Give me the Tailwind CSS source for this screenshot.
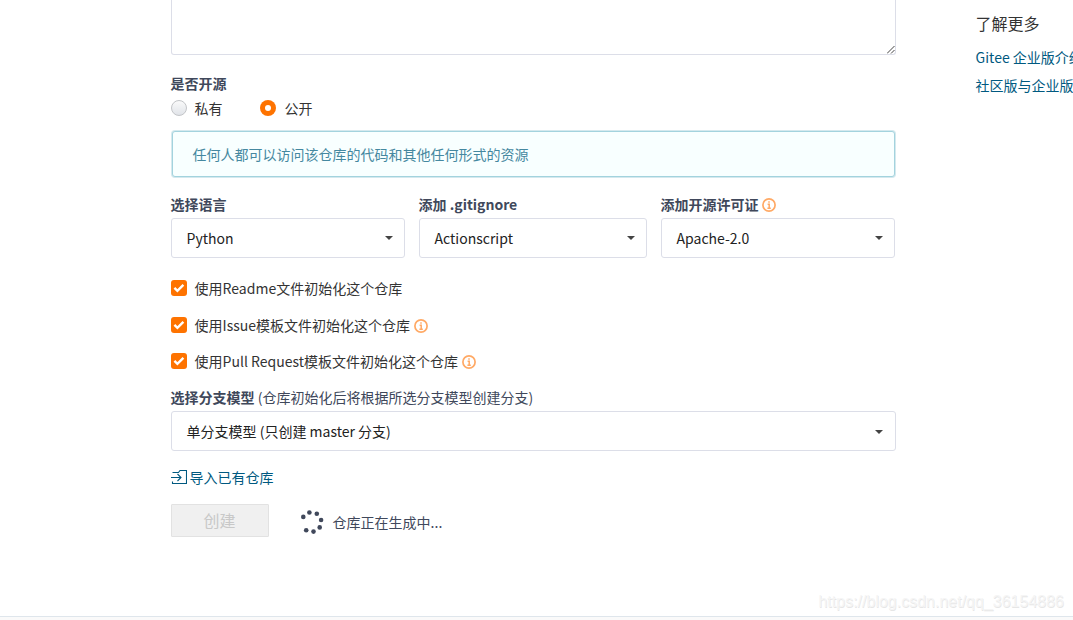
<!DOCTYPE html>
<html lang="zh-CN">

<head>
    <meta charset="UTF-8">
    <meta name="viewport" content="width=device-width, initial-scale=1.0">
    <title>新建仓库 - Gitee</title>
    <script src="https://cdn.jsdelivr.net/npm/@tailwindcss/browser@4"></script>
</head>

<body class="relative h-[620px] overflow-hidden bg-white font-['Noto_Sans_CJK_SC',sans-serif] text-sm leading-5 text-[#40485b]">
    <div class="flex h-[616px] gap-20 overflow-hidden pl-[170.6px]">
        <form class="w-[725px] shrink-0">
            <!-- description -->
            <div class="flex h-[55px] items-end justify-end rounded-b-[3px] border border-t-0 border-[#dcdee8]">
                <svg class="size-2" viewBox="0 0 8 8" fill="none" stroke="#444" stroke-width="1">
                    <path d="M0 7.5L7.5 0M4 7.5L7.5 4" />
                </svg>
            </div>

            <!-- visibility -->
            <div class="mt-[18px] font-bold">是否开源</div>
            <div class="mt-[5px] flex h-5 items-center text-[#333]">
                <label class="flex w-[89px] items-center gap-2">
                    <span class="size-4 rounded-full border border-[#c3c5c8] bg-linear-to-b from-[#fafafa] to-[#e1e4e9]"></span>
                    <span>私有</span>
                </label>
                <label class="flex items-center gap-[9px]">
                    <span class="flex size-4 items-center justify-center rounded-full bg-[#fe7300]"><span class="size-1.5 rounded-full bg-white"></span></span>
                    <span>公开</span>
                </label>
            </div>
            <div class="mx-px mt-[13px] flex h-[46px] items-center rounded-[3px] border border-[#a3d3de] bg-[#f8ffff] pl-5 text-[#4588a0] shadow-[0_0_0_1px_#d5e9ee]">任何人都可以访问该仓库的代码和其他任何形式的资源</div>

            <!-- language, gitignore, license -->
            <div class="mt-[17px] flex gap-3.5">
                <div class="w-[234px]">
                    <div class="font-bold">选择语言</div>
                    <div class="mt-1 flex h-10 items-center justify-between rounded-[3px] border border-[#dcdee8] pr-[11px] pl-[15px] text-[#222]">
                        <span>Python</span>
                        <svg class="h-1 w-2" viewBox="0 0 8 4"><path d="M0 0h8L4 4z" fill="#444" /></svg>
                    </div>
                </div>
                <div class="w-[228px]">
                    <div class="font-bold">添加 .gitignore</div>
                    <div class="mt-1 flex h-10 items-center justify-between rounded-[3px] border border-[#dcdee8] pr-[11px] pl-[15px] text-[#222]">
                        <span>Actionscript</span>
                        <svg class="h-1 w-2" viewBox="0 0 8 4"><path d="M0 0h8L4 4z" fill="#444" /></svg>
                    </div>
                </div>
                <div class="w-[234px]">
                    <div class="flex items-center gap-[3px] font-bold">添加开源许可证
                        <svg class="mt-px size-3.5" viewBox="0 0 14 14" fill="none" stroke="#ffa965">
                            <circle cx="7" cy="7" r="6.1" stroke-width="1.7" />
                            <path d="M7 3.2v1.6M5.6 6.2h1.6v4M5.4 10.2h3.4" stroke-width="1.5" />
                        </svg>
                    </div>
                    <div class="mt-1 flex h-10 items-center justify-between rounded-[3px] border border-[#dcdee8] pr-[11px] pl-[15px] text-[#222]">
                        <span>Apache-2.0</span>
                        <svg class="h-1 w-2" viewBox="0 0 8 4"><path d="M0 0h8L4 4z" fill="#444" /></svg>
                    </div>
                </div>
            </div>

            <!-- init options -->
            <div class="mt-5 flex h-5 items-center text-[#333]">
                <svg class="mr-2 size-4" viewBox="0 0 16 16"><rect width="16" height="16" rx="3" fill="#fe7300" /><path d="M3.4 7.8l3 3 6-6" fill="none" stroke="#fff" stroke-width="2.4" /></svg>
                <span>使用Readme文件初始化这个仓库</span>
            </div>
            <div class="mt-[17px] flex h-5 items-center text-[#333]">
                <svg class="mr-2 size-4" viewBox="0 0 16 16"><rect width="16" height="16" rx="3" fill="#fe7300" /><path d="M3.4 7.8l3 3 6-6" fill="none" stroke="#fff" stroke-width="2.4" /></svg>
                <span>使用Issue模板文件初始化这个仓库</span>
                <svg class="mt-0.5 ml-1 size-3.5" viewBox="0 0 14 14" fill="none" stroke="#ffa965">
                    <circle cx="7" cy="7" r="6.1" stroke-width="1.7" />
                    <path d="M7 3.2v1.6M5.6 6.2h1.6v4M5.4 10.2h3.4" stroke-width="1.5" />
                </svg>
            </div>
            <div class="mt-4 flex h-5 items-center text-[#333]">
                <svg class="mr-2 size-4" viewBox="0 0 16 16"><rect width="16" height="16" rx="3" fill="#fe7300" /><path d="M3.4 7.8l3 3 6-6" fill="none" stroke="#fff" stroke-width="2.4" /></svg>
                <span>使用Pull Request模板文件初始化这个仓库</span>
                <svg class="mt-0.5 ml-1 size-3.5" viewBox="0 0 14 14" fill="none" stroke="#ffa965">
                    <circle cx="7" cy="7" r="6.1" stroke-width="1.7" />
                    <path d="M7 3.2v1.6M5.6 6.2h1.6v4M5.4 10.2h3.4" stroke-width="1.5" />
                </svg>
            </div>

            <!-- branch model -->
            <div class="mt-4"><b>选择分支模型</b> (仓库初始化后将根据所选分支模型创建分支)</div>
            <div class="mt-1 flex h-10 items-center justify-between rounded-[3px] border border-[#dcdee8] pr-3 pl-[15px] text-[#222]">
                <span>单分支模型 (只创建 master 分支)</span>
                <svg class="mt-px h-1 w-2" viewBox="0 0 8 4"><path d="M0 0h8L4 4z" fill="#444" /></svg>
            </div>

            <a class="mt-4 flex h-5 items-center gap-[3px] text-[#005980]">
                <svg class="size-4" viewBox="0 0 16 16" fill="none" stroke="#005980" stroke-width="1.1">
                    <path d="M1.5 3.5h6l1.5-2h6.5v13H1.5v-2M0 8.5h10M6.5 5l3.5 3.5L6.5 12" />
                </svg>
                <span>导入已有仓库</span>
            </a>

            <div class="mt-[17px] flex">
                <button type="button" disabled class="flex h-[33px] w-[98px] justify-center rounded-[1px] border border-[#e2e2e2] bg-[#f0f0f0] pt-[3px] text-base text-[#c8c8c8]">创建</button>
                <svg class="mt-1.5 ml-8 size-6" viewBox="0 0 24 24" fill="#40485b">
                    <circle cx="2.3" cy="6.9" r="2.3" />
                    <circle cx="8.4" cy="2.5" r="2.3" />
                    <circle cx="15.8" cy="3.8" r="2.3" />
                    <circle cx="20.1" cy="10" r="2.3" />
                    <circle cx="18.7" cy="17.4" r="2.3" />
                    <circle cx="12.5" cy="21.6" r="2.3" />
                    <circle cx="5.2" cy="20.3" r="2.3" />
                </svg>
                <span class="mt-2 ml-2">仓库正在生成中...</span>
            </div>
        </form>

        <aside class="w-60 shrink-0 whitespace-nowrap">
            <div class="mt-[11px] text-base leading-6 text-[#333]">了解更多</div>
            <a class="mt-3 block text-[#005980]">Gitee 企业版介绍</a>
            <a class="mt-2 block text-[#005980]">社区版与企业版的区别</a>
        </aside>
    </div>
    <footer class="h-1 border-t border-[#dfe6ec] bg-[#fafafa]"></footer>
    <div class="absolute right-[9px] bottom-1.5 font-['Liberation_Sans',sans-serif] text-base text-[#f5f5f5] [text-shadow:0.5px_0.5px_0_#e6e6e6]">https://blog.csdn.net/qq_36154886</div>
</body>

</html>
